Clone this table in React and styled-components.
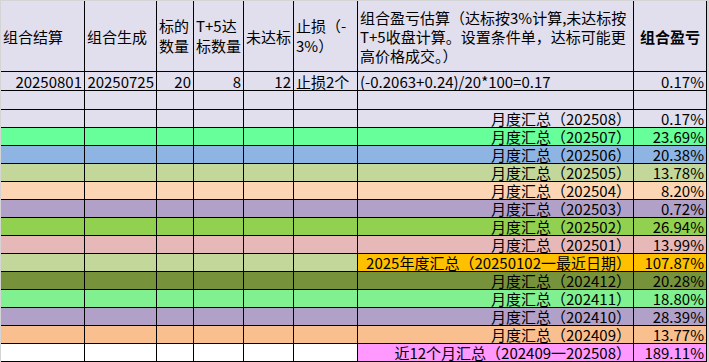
import React from 'react';
import styled, { createGlobalStyle } from 'styled-components';

const GlobalStyle = createGlobalStyle`
  html, body {
    margin: 0;
    padding: 0;
    background: #d4d4d4;
  }
  body {
    font-family: "Noto Sans CJK SC", "Noto Sans", sans-serif;
    color: #000;
  }
`;

const Page = styled.div`
  padding: 1px 0 0 1px;
  min-height: 100vh;
  box-sizing: border-box;
  background: #d4d4d4;
`;

const Sheet = styled.div`
  display: grid;
  grid-template-columns: 84px 72px 37px 50px 50px 64px 276px 73px;
  grid-template-rows: 71px 19px 19px repeat(14, 18px);
  width: 706px;
`;

const Cell = styled.div`
  box-sizing: border-box;
  border-right: 1px solid #000;
  border-bottom: 1px solid #000;
  background: ${(p) => p.bg || '#e1dfee'};
  font-size: 15px;
  line-height: 17px;
  font-weight: ${(p) => (p.bold ? 700 : 400)};
  white-space: nowrap;
  display: flex;
  align-items: center;
  justify-content: ${(p) =>
    p.align === 'right' ? 'flex-end' : p.align === 'center' ? 'center' : 'flex-start'};
  padding: 0 2px;
  min-width: 0;
`;

const HeadText = styled.div`
  line-height: ${(p) => p.lh || 20}px;
  white-space: nowrap;
`;

const LAV = '#e1dfee';

// 月度汇总行：左侧六格同色，右侧两格可另设颜色
const summaryRows = [
  { label: '月度汇总（202508）', value: '0.17%', bg: LAV },
  { label: '月度汇总（202507）', value: '23.69%', bg: '#66ff99' },
  { label: '月度汇总（202506）', value: '20.38%', bg: '#8db4e2' },
  { label: '月度汇总（202505）', value: '13.78%', bg: '#c4d79b' },
  { label: '月度汇总（202504）', value: '8.20%', bg: '#fcd5b4' },
  { label: '月度汇总（202503）', value: '0.72%', bg: '#b1a0c7' },
  { label: '月度汇总（202502）', value: '26.94%', bg: '#92d050' },
  { label: '月度汇总（202501）', value: '13.99%', bg: '#e6b8b7' },
  { label: '2025年度汇总（20250102一最近日期）', value: '107.87%', bg: '#c4d79b', right: '#ffc000' },
  { label: '月度汇总（202412）', value: '20.28%', bg: '#76933c' },
  { label: '月度汇总（202411）', value: '18.80%', bg: '#80f090' },
  { label: '月度汇总（202410）', value: '28.39%', bg: '#b1a0c7' },
  { label: '月度汇总（202409）', value: '13.77%', bg: '#fabf8f' },
  { label: '近12个月汇总（202409一202508）', value: '189.11%', bg: '#ffffff', right: '#ff99ff' },
];

function App() {
  return (
    <Page>
      <GlobalStyle />
      <Sheet>
        {/* 表头 */}
        <Cell>组合结算</Cell>
        <Cell>组合生成</Cell>
        <Cell>
          <HeadText>标的<br />数量</HeadText>
        </Cell>
        <Cell>
          <HeadText>T+5达<br />标数量</HeadText>
        </Cell>
        <Cell>未达标</Cell>
        <Cell>
          <HeadText>止损（-<br />3%）</HeadText>
        </Cell>
        <Cell>
          <HeadText lh={19}>
            组合盈亏估算（达标按3%计算,未达标按<br />
            T+5收盘计算。设置条件单，达标可能更<br />
            高价格成交。）
          </HeadText>
        </Cell>
        <Cell bold align="center">组合盈亏</Cell>

        {/* 数据行 */}
        <Cell align="right">20250801</Cell>
        <Cell align="right">20250725</Cell>
        <Cell align="right">20</Cell>
        <Cell align="right">8</Cell>
        <Cell align="right">12</Cell>
        <Cell>止损2个</Cell>
        <Cell>(-0.2063+0.24)/20*100=0.17</Cell>
        <Cell align="right">0.17%</Cell>

        {/* 空行 */}
        {Array.from({ length: 8 }).map((_, i) => (
          <Cell key={`e${i}`} />
        ))}

        {summaryRows.map((r) => (
          <React.Fragment key={r.label}>
            {Array.from({ length: 6 }).map((_, i) => (
              <Cell key={i} bg={r.bg} />
            ))}
            <Cell bg={r.right || r.bg} align="right">{r.label}</Cell>
            <Cell bg={r.right || r.bg} align="right">{r.value}</Cell>
          </React.Fragment>
        ))}
      </Sheet>
    </Page>
  );
}

export default App;
